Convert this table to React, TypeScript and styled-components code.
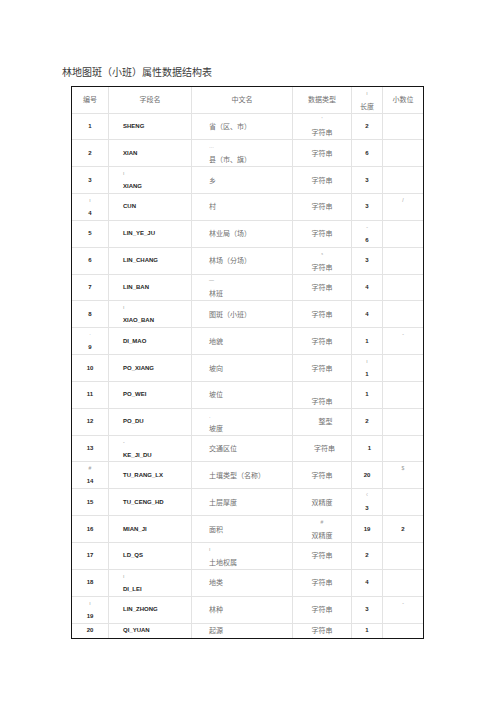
import { createGlobalStyle } from 'styled-components';
import styled from 'styled-components';

const GlobalStyle = createGlobalStyle`
  html, body {
    margin: 0;
    padding: 0;
    background: #ffffff;
  }
`;

const Page = styled.div`
  width: 496px;
  min-height: 702px;
  padding: 66px 0 0 62px;
  box-sizing: border-box;
  display: flex;
  flex-direction: column;
  align-items: flex-start;
`;

const Title = styled.h1`
  margin: 0;
  font-family: 'Noto Sans CJK SC', sans-serif;
  font-weight: 400;
  font-size: 10px;
  line-height: 12px;
  color: #3a3a3a;
`;

const Table = styled.div`
  margin: 7.5px 0 0 9px;
  display: grid;
  grid-template-columns: 37px 83px 101px 59px 31px 40px;
  grid-template-rows: 27px repeat(19, 26.85px) 14px;
  border: 1.5px solid #151515;
`;

type Kind = 'num' | 'code' | 'zh' | 'zhc' | 'head';

const Cell = styled.div<{ $kind: Kind; $last: boolean; $bottom: boolean; $shift?: number }>`
  box-sizing: border-box;
  display: flex;
  flex-direction: column;
  justify-content: center;
  align-items: ${(p) => (p.$kind === 'code' || p.$kind === 'zh' ? 'flex-start' : 'center')};
  padding-left: ${(p) => (p.$kind === 'code' ? 14 : p.$kind === 'zh' ? 17 : p.$shift ?? 0)}px;
  border-right: ${(p) => (p.$last ? 'none' : '1px solid #e3e3e3')};
  border-bottom: ${(p) => (p.$bottom ? 'none' : '1px solid #e3e3e3')};
  overflow: hidden;
  font-family: ${(p) =>
    p.$kind === 'num' || p.$kind === 'code'
      ? "'Liberation Sans', Arial, sans-serif"
      : "'Noto Sans CJK SC', sans-serif"};
  font-weight: ${(p) => (p.$kind === 'num' || p.$kind === 'code' ? 700 : 400)};
  font-size: ${(p) => (p.$kind === 'num' || p.$kind === 'code' ? '6px' : '7px')};
  color: ${(p) => (p.$kind === 'num' || p.$kind === 'code' ? '#262626' : '#707070')};
  white-space: nowrap;
`;

const Line = styled.span`
  display: block;
  height: 13px;
  line-height: 13px;
`;

const Mark = styled.span`
  display: block;
  height: 13px;
  line-height: 13px;
  font-family: 'Liberation Sans', Arial, sans-serif;
  font-weight: 400;
  font-size: 5px;
  color: #9a9a9a;
`;

type Entry = string | [string, string];

const header: Entry[] = ['编号', '字段名', '中文名', '数据类型', ['ı', '长度'], '小数位'];

const rows: Entry[][] = [
  ['1', 'SHENG', '省（区、市）', ["'", '字符串'], '2', ''],
  ['2', 'XIAN', ['…', '县（市、旗）'], '字符串', '6', ''],
  ['3', ['ı', 'XIANG'], '乡', '字符串', '3', ''],
  [['ı', '4'], 'CUN', '村', '字符串', '3', ['/', '']],
  ['5', 'LIN_YE_JU', '林业局（场）', '字符串', ['-', '6'], ''],
  ['6', 'LIN_CHANG', '林场（分场）', ['ˢ', '字符串'], '3', ''],
  ['7', 'LIN_BAN', ['—', '林班'], '字符串', '4', ''],
  ['8', ['ı', 'XIAO_BAN'], '图斑（小班）', '字符串', '4', ''],
  [['·', '9'], 'DI_MAO', '地貌', '字符串', '1', ['-', '']],
  ['10', 'PO_XIANG', '坡向', '字符串', ['ı', '1'], ''],
  ['11', 'PO_WEI', '坡位', ['', '字符串'], '1', ''],
  ['12', 'PO_DU', ['ˌ', '坡度'], '整型', '2', ''],
  ['13', ['-', 'KE_JI_DU'], '交通区位', '字符串', '1', ''],
  [['#', '14'], 'TU_RANG_LX', '土壤类型（名称）', '字符串', '20', ['$', '']],
  ['15', 'TU_CENG_HD', '土层厚度', '双精度', ['ˁ', '3'], ''],
  ['16', 'MIAN_JI', '面积', ['#', '双精度'], '19', '2'],
  ['17', 'LD_QS', ['ı', '土地权属'], '字符串', '2', ''],
  ['18', ['ı', 'DI_LEI'], '地类', '字符串', '4', ''],
  [['ı', '19'], 'LIN_ZHONG', '林种', '字符串', '3', ['-', '']],
  ['20', 'QI_YUAN', '起源', '字符串', '1', ''],
];

const kinds: Kind[] = ['num', 'code', 'zh', 'zhc', 'num', 'num'];

// small horizontal nudges seen in the scan
const shifts: Record<string, number> = { '11-3': 7, '12-3': 5, '12-4': 5 };

const renderEntry = (e: Entry) =>
  Array.isArray(e) ? (
    <>
      <Mark>{e[0]}</Mark>
      <Line>{e[1]}</Line>
    </>
  ) : (
    <Line>{e}</Line>
  );

const App = () => {
  return (
    <>
      <GlobalStyle />
      <Page>
        <Title>林地图斑（小班）属性数据结构表</Title>
        <Table>
          {header.map((e, i) => (
            <Cell key={`h-${i}`} $kind="head" $last={i === 5} $bottom={false}>
              {renderEntry(e)}
            </Cell>
          ))}
          {rows.map((row, r) =>
            row.map((e, c) => (
              <Cell
                key={`${r}-${c}`}
                $kind={kinds[c]}
                $last={c === 5}
                $bottom={r === rows.length - 1}
                $shift={shifts[`${r}-${c}`]}
              >
                {renderEntry(e)}
              </Cell>
            ))
          )}
        </Table>
      </Page>
    </>
  );
};

export default App;
